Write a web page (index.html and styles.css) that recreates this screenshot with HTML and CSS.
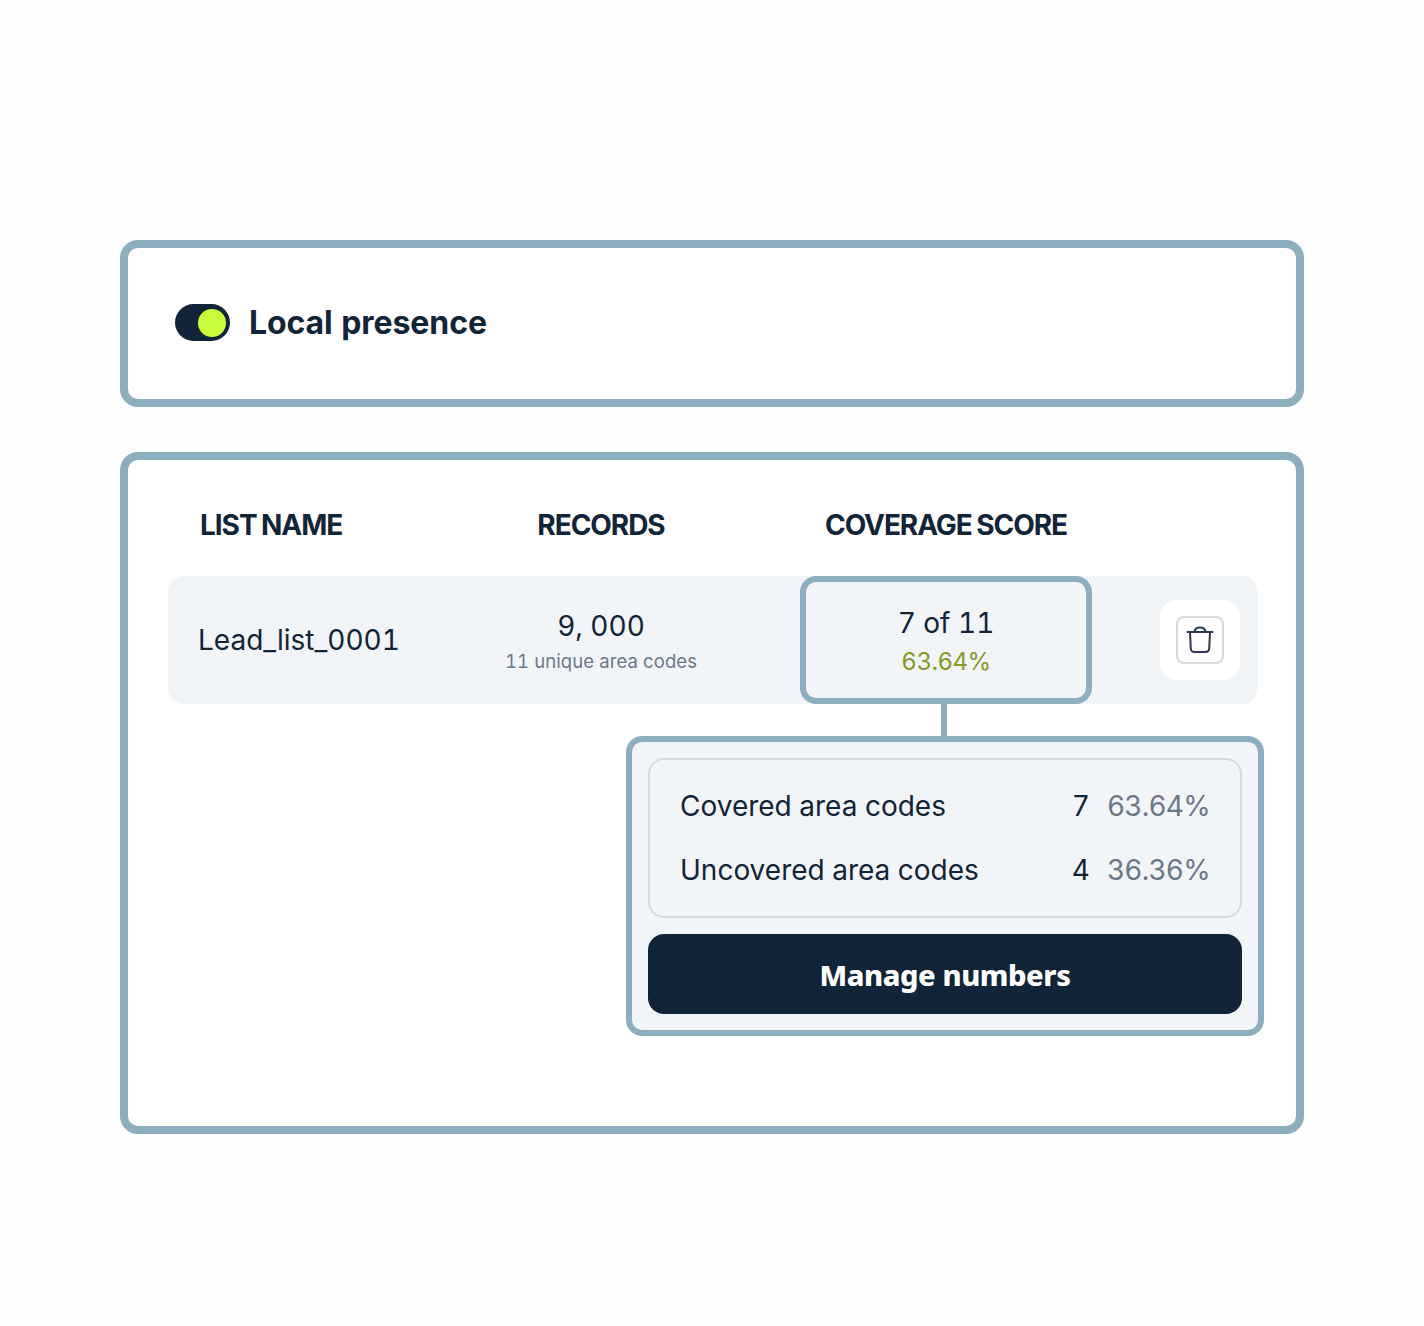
FILE: index.html
```html
<!DOCTYPE html>
<html>
<head>
  <meta name="viewport" content="width=device-width, initial-scale=1">
  <title>Local presence</title>
  <link rel="stylesheet" href="styles.css">
</head>
<body>
  <div class="container">
    <div class="card toggle-card">
      <span class="toggle"><span class="toggle-knob"></span></span>
      <h1>Local presence</h1>
    </div>

    <div class="card list-card">
      <div class="columns list-header">
        <div class="head-name">LIST NAME</div>
        <div class="head-center">RECORDS</div>
        <div class="head-center">COVERAGE SCORE</div>
      </div>

      <div class="columns list-row">
        <div class="list-name">Lead_list_0001</div>
        <div class="cell-center records">
          <div class="cell-main">9, 000</div>
          <div class="cell-sub">11 unique area codes</div>
        </div>
        <div class="cell-center score">
          <div class="cell-main">7 of 11</div>
          <div class="cell-sub score-sub">63.64%</div>
        </div>
        <div class="row-actions">
          <button class="delete-btn" type="button" aria-label="Delete">
            <span class="delete-inner">
              <svg width="28" height="28" viewBox="0 0 28 28" fill="none" stroke="#2b3a4f" stroke-width="2" stroke-linecap="round" stroke-linejoin="round">
                <path d="M1.5 6h25"/>
                <path d="M4 6l.8 16.500a3.500 3.500 0 0 0 3.500 3.500h11.400a3.500 3.500 0 0 0 3.500-3.500l.8-16.500"/>
                <path d="M8.500 6c0-3 2-4.500 5.500-4.500s5.500 1.500 5.500 4.500"/>
              </svg>
            </span>
          </button>
        </div>
      </div>

      <div class="details">
        <div class="connector"></div>
        <div class="popover">
          <div class="stats">
            <div class="stat">
              <span class="stat-label">Covered area codes</span>
              <span class="stat-count">7</span>
              <span class="stat-percent">63.64%</span>
            </div>
            <div class="stat">
              <span class="stat-label">Uncovered area codes</span>
              <span class="stat-count">4</span>
              <span class="stat-percent">36.36%</span>
            </div>
          </div>
          <button class="manage-btn" type="button">Manage numbers</button>
        </div>
      </div>
    </div>
  </div>
</body>
</html>
```

FILE: styles.css
```css
* {
  margin: 0;
  padding: 0;
  box-sizing: border-box;
}

body {
  font-family: 'Inter', 'Liberation Sans', sans-serif;
  font-variant-numeric: tabular-nums;
  background: #fefefe;
  color: #122438;
  min-height: 1326px;
}

.container {
  width: 1184px;
  margin: 0 auto;
  padding-top: 240px;
  display: flex;
  flex-direction: column;
  gap: 45px;
}

.card {
  background: #fff;
  border: 8px solid #8daebf;
  border-radius: 18px;
}

.toggle-card {
  height: 167px;
  padding: 0 0 2px 47px;
  display: flex;
  align-items: center;
  gap: 19px;
}

.toggle {
  width: 55px;
  height: 37px;
  border-radius: 19px;
  background: #122438;
  display: flex;
  align-items: center;
  justify-content: flex-end;
  padding-right: 4px;
}

.toggle-knob {
  width: 28px;
  height: 28px;
  border-radius: 50%;
  background: #c9fc3a;
}

h1 {
  font-size: 32px;
  font-weight: 700;
  line-height: 40px;
  letter-spacing: -0.08px;
}

.list-card {
  height: 682px;
  padding: 44px 38px 0 40px;
}

.columns {
  display: grid;
  grid-template-columns: 234px 398px 292px 1fr;
  align-items: center;
}

.list-header {
  height: 72px;
  padding-bottom: 31px;
  font-size: 28px;
  font-weight: 650;
  letter-spacing: -1.05px;
  word-spacing: -2px;
}

.head-name {
  padding-left: 32px;
}

.head-center {
  text-align: center;
}

.list-row {
  height: 128px;
  background: #f2f5f8;
  border-radius: 16px;
}

.list-name {
  padding-left: 30px;
  font-size: 28px;
}

.cell-center {
  text-align: center;
}

.records {
  padding-bottom: 2px;
}

.cell-main {
  font-size: 28px;
  line-height: 38px;
  margin-top: 4px;
}

.cell-sub {
  font-size: 18.5px;
  line-height: 30px;
  margin-top: 1px;
  color: #6b7888;
  letter-spacing: 0.1px;
}

.score {
  height: 128px;
  border: 6px solid #8daebf;
  border-radius: 16px;
  padding-top: 18px;
}

.score-sub {
  color: #7f9c27;
  font-size: 24px;
  line-height: 38px;
  letter-spacing: -0.5px;
}

.row-actions {
  display: flex;
  justify-content: flex-end;
  padding-right: 18px;
}

.delete-btn {
  width: 80px;
  height: 80px;
  background: #fff;
  border: none;
  border-radius: 16px;
  display: flex;
  align-items: center;
  justify-content: center;
}

.delete-inner {
  width: 48px;
  height: 48px;
  border: 2px solid #d5dade;
  border-radius: 8px;
  display: flex;
  align-items: center;
  justify-content: center;
}

.details {
  display: flex;
  flex-direction: column;
  align-items: center;
  width: 638px;
  margin-left: 458px;
}

.connector {
  width: 6px;
  height: 32px;
  margin-right: 2px;
  background: #8daebf;
}

.popover {
  width: 638px;
  height: 300px;
  background: #f2f5f8;
  border: 6px solid #8daebf;
  border-radius: 16px;
  padding: 16px;
  display: flex;
  flex-direction: column;
  gap: 16px;
}

.stats {
  height: 160px;
  border: 2px solid #d5dade;
  border-radius: 16px;
  padding: 14px 30px;
  display: flex;
  flex-direction: column;
}

.stat {
  height: 64px;
  display: flex;
  align-items: center;
  font-size: 28px;
}

.stat-label {
  flex: 1;
}

.stat-percent {
  width: 102px;
  margin: 0 1px 0 17px;
  text-align: right;
  color: #6b7888;
  letter-spacing: -0.8px;
}

.manage-btn {
  height: 80px;
  border: none;
  border-radius: 16px;
  background: #122438;
  color: #fff;
  font-family: 'Noto Sans', sans-serif;
  font-size: 29px;
  font-weight: 800;
  letter-spacing: -0.4px;
}
```
